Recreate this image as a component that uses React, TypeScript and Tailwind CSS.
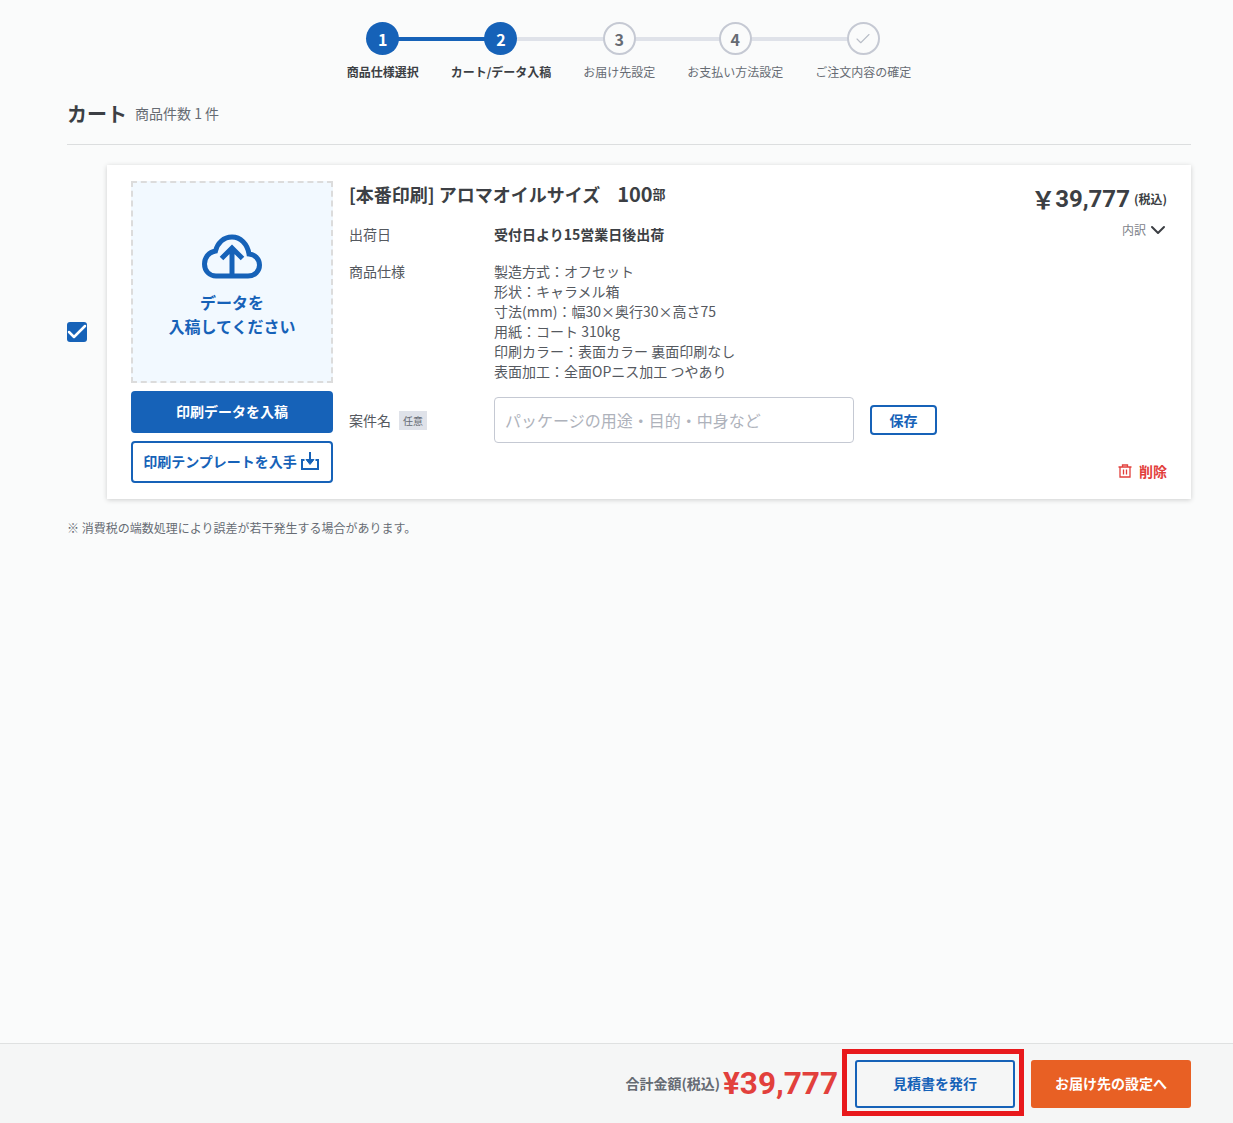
import { Check, ChevronDown } from "lucide-react";

const font = "font-['Noto_Sans_CJK_JP',sans-serif]";
const priceFont = "font-['Roboto','Noto_Sans_CJK_JP',sans-serif]";

const steps = [
  { label: "商品仕様選択", mark: "1", done: true, line: "w-[119px] bg-[#1662b8]" },
  { label: "カート/データ入稿", mark: "2", done: true, line: "w-[118px] bg-[#dfe2e9]" },
  { label: "お届け先設定", mark: "3", done: false, line: "w-[116px] bg-[#dfe2e9]" },
  { label: "お支払い方法設定", mark: "4", done: false, line: "w-[128px] bg-[#dfe2e9]" },
  { label: "ご注文内容の確定", mark: "", done: false, line: "" },
];

const specs = [
  "製造方式：オフセット",
  "形状：キャラメル箱",
  "寸法(mm)：幅30×奥行30×高さ75",
  "用紙：コート 310kg",
  "印刷カラー：表面カラー 裏面印刷なし",
  "表面加工：全面OPニス加工 つやあり",
];

function Stepper() {
  return (
    <div className="flex justify-center gap-8 pt-[22px]">
      {steps.map((step) => (
        <div key={step.label} className="relative flex flex-col items-center">
          {step.line && <div className={`absolute left-1/2 top-[15px] h-[4px] ${step.line}`} />}
          {step.done ? (
            <div className="relative flex h-[33px] w-[33px] items-center justify-center rounded-full bg-[#1662b8] text-[16px] font-bold text-white">
              {step.mark}
            </div>
          ) : (
            <div className="relative flex h-[33px] w-[33px] items-center justify-center rounded-full border-2 border-[#c5c9d3] bg-[#fafbfb] text-[16px] font-bold text-[#666b73]">
              {step.mark || <Check className="h-[18px] w-[18px] text-[#b9bdc7]" strokeWidth={1.5} />}
            </div>
          )}
          <div
            className={`mt-[8px] text-[12px] leading-[18px] ${
              step.done ? "font-bold text-[#3c3f44]" : "text-[#666b73]"
            }`}
          >
            {step.label}
          </div>
        </div>
      ))}
    </div>
  );
}

function UploadPanel() {
  return (
    <div className="flex w-[202px] shrink-0 flex-col gap-2">
      <div className="flex h-[202px] flex-col items-center justify-center border-2 border-dashed border-[#dcdcdc] bg-[#f2f9ff] pt-[7px] text-[16px] font-bold leading-[24px] text-[#1662b8]">
        <svg viewBox="0 0 60 46" className="mb-[10px] h-[46px] w-[60px]" fill="none" stroke="#1662b8">
          <path
            d="M14 42 H46 C53 42 57.5 37 57.5 31 C57.5 25 53 20.5 47 20 C45.5 10 38.5 3 30 3 C21.5 3 15.5 9 13.5 17 C7 18 2.5 23.5 2.5 30 C2.5 37 7.5 42 14 42 Z"
            strokeWidth="5"
          />
          <path d="M30 41 V14 M19.5 24.5 L30 14 L40.5 24.5" strokeWidth="5" />
        </svg>
        <div>データを</div>
        <div>入稿してください</div>
      </div>
      <button className="h-[42px] rounded-[4px] bg-[#1662b8] pb-[2px] text-[14px] font-bold text-white">
        印刷データを入稿
      </button>
      <button className="flex h-[42px] items-center justify-center gap-[3px] rounded-[4px] border-2 border-[#1662b8] bg-white pb-[2px] pr-[1px] text-[14px] font-bold text-[#1662b8]">
        印刷テンプレートを入手
        <svg viewBox="0 0 20 20" className="h-5 w-5" fill="none" stroke="#1662b8" strokeWidth="2">
          <path d="M4.5 9 H2 V18 H18 V9 H15.5 M10 1 V12" />
          <path d="M6 8.5 L10 13.5 L14 8.5 Z" fill="#1662b8" strokeWidth="1" />
        </svg>
      </button>
    </div>
  );
}

function ItemDetail() {
  return (
    <div className="flex min-w-0 flex-1 flex-col pr-6 text-[#3c3f44]">
      <div className="flex items-start justify-between">
        <div>
          <div className="flex h-[26px] items-center text-[18px] font-bold leading-[26px]">
            [本番印刷] アロマオイルサイズ
            <span className="ml-[17px] text-[20px]">100</span>
            <span className="text-[13px]">部</span>
          </div>
          <div className="mt-[17px] flex text-[14px] leading-[20px]">
            <div className="w-[145px] text-[#55595f]">出荷日</div>
            <div className="font-bold">受付日より15営業日後出荷</div>
          </div>
          <div className="mt-[17px] flex text-[14px] leading-[20px]">
            <div className="w-[145px] text-[#55595f]">商品仕様</div>
            <div className="text-[#55595f]">
              {specs.map((line) => (
                <div key={line}>{line}</div>
              ))}
            </div>
          </div>
        </div>
        <div className="flex flex-col items-end pt-[3px]">
          <div className="flex items-center font-bold leading-[30px]">
            <span className="text-[24px]">{"\uFFE5"}</span>
            <span className={`${priceFont} text-[24px]`}>39,777</span>
            <span className="ml-1 text-[12px]">(税込)</span>
          </div>
          <div className="-mr-[3px] mt-[4px] flex items-center text-[12px] leading-[18px] text-[#7d828a]">
            内訳
            <ChevronDown className="h-6 w-6 text-[#3c3f44]" strokeWidth={2} />
          </div>
        </div>
      </div>
      <div className="mt-[16px] flex items-center text-[14px]">
        <div className="flex w-[145px] items-center gap-2 text-[#55595f]">
          案件名
          <span className="flex h-[19px] w-[28px] items-center justify-center bg-[#dfe2e9] text-[10px] text-[#666b73]">
            任意
          </span>
        </div>
        <input
          placeholder="パッケージの用途・目的・中身など"
          className="h-[46px] w-[360px] rounded-[4px] border border-[#c5c9d3] bg-white px-[10px] text-[16px] outline-none placeholder:text-[#aeb2bb]"
        />
        <button className="ml-4 h-[30px] w-[67px] rounded-[4px] border-2 border-[#1662b8] bg-white text-[14px] font-bold text-[#1662b8]">
          保存
        </button>
      </div>
      <div className="mt-[18px] flex items-center justify-end gap-[7px] text-[14px] font-bold leading-[20px] text-[#e2403c]">
        <svg viewBox="0 0 14 14" className="h-[14px] w-[14px]" fill="none" stroke="#e2403c" strokeWidth="1.3">
          <path d="M0.5 3 H13.5 M4.5 3 V1 H9.5 V3 M2 3 V13 H12 V3 M5.5 5.5 V10.5 M8.5 5.5 V10.5" />
        </svg>
        削除
      </div>
    </div>
  );
}

export default function App() {
  return (
    <div className={`${font} flex min-h-[1123px] flex-col bg-[#fafbfb]`}>
      <main className="flex-1 pl-[67px] pr-[42px]">
        <Stepper />
        <div className="mt-[18px] flex items-center gap-2 border-b border-[#dcdedf] pb-[15px]">
          <h1 className="text-[20px] font-bold leading-[30px] text-[#3c3f44]">カート</h1>
          <span className="-translate-y-px text-[14px] text-[#666b73]">商品件数 1 件</span>
        </div>
        <div className="mt-5 flex items-center">
          <div className="w-10 shrink-0">
            <div className="flex h-5 w-5 items-center justify-center rounded-[3px] bg-[#1662b8]">
              <Check className="h-6 w-6 shrink-0 text-white" strokeWidth={2.5} />
            </div>
          </div>
          <div className="flex flex-1 gap-4 bg-white pb-4 pl-6 pt-4 shadow-[0_1px_5px_rgba(0,0,0,0.18)]">
            <UploadPanel />
            <ItemDetail />
          </div>
        </div>
        <p className="mt-[20px] text-[12px] leading-[18px] text-[#666b73]">
          ※ 消費税の端数処理により誤差が若干発生する場合があります。
        </p>
      </main>
      <footer className="flex h-20 items-center justify-end border-t border-[#dfe1e1] bg-[#f5f6f6] pr-[42px]">
        <span className="text-[14px] font-bold text-[#666b73]">合計金額(税込)</span>
        <span className={`${priceFont} ml-[3px] text-[31.5px] font-bold leading-none text-[#e2403c]`}>¥39,777</span>
        <div className="relative ml-[17px]">
          <button className="h-12 w-40 rounded-[3px] border-2 border-[#1662b8] bg-transparent text-[14px] font-bold text-[#1662b8]">
            見積書を発行
          </button>
          <div className="pointer-events-none absolute -bottom-2 -left-[13px] -right-[9px] -top-[11px] border-[5px] border-[#e8191c]" />
        </div>
        <button className="ml-4 h-12 w-40 rounded-[3px] bg-[#e86024] text-[14px] font-bold text-white">
          お届け先の設定へ
        </button>
      </footer>
    </div>
  );
}
